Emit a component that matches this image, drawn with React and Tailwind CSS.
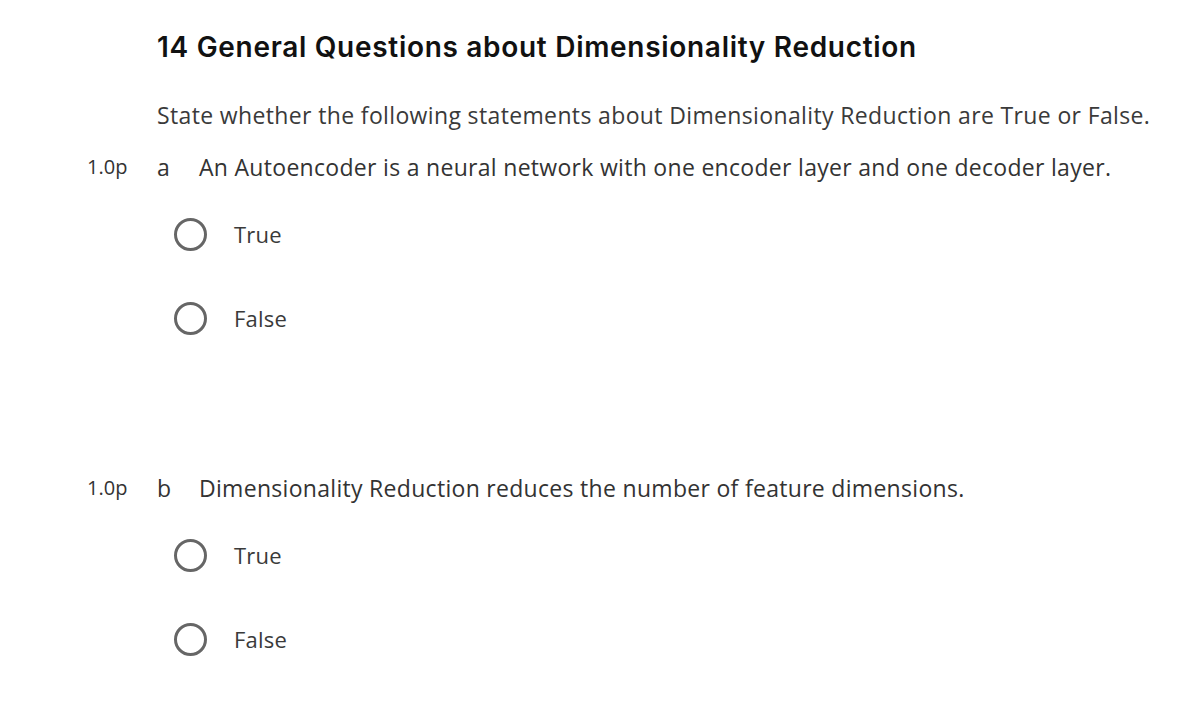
import React from "react";

const body = { fontFamily: "'Open Sans', Lato, sans-serif" };

function Radio({ label }) {
  return (
    <div className="flex items-center h-[34px]">
      <div className="w-[33px] h-[33px] rounded-full border-[3px] border-[#666]" />
      <span className="ml-[27px] text-[22px] tracking-[0.2px] text-[#3a3a3a]" style={body}>{label}</span>
    </div>
  );
}

function Question({ letter, text, className }) {
  return (
    <div className={className}>
      <div className="flex items-center h-[30px] text-[23px] tracking-[0.3px] text-[#333]" style={body}>
        <span className="w-[70px] text-[20px] tracking-normal">1.0p</span>
        <span className="w-[42px]">{letter}</span>
        <span>{text}</span>
      </div>
      <div className="ml-[87px] mt-[35px] flex flex-col gap-[50px]">
        <Radio label="True" />
        <Radio label="False" />
      </div>
    </div>
  );
}

export default function App() {
  return (
    <div className="w-[1200px] h-[710px] bg-white overflow-hidden">
      <div className="pl-[87px] pt-[30px]">
        <h1 className="ml-[70px] text-[28px] font-semibold tracking-[0.7px] text-[#111] h-[34px] leading-[34px]" style={{ fontFamily: "Inter, sans-serif" }}>
          14 General Questions about Dimensionality Reduction
        </h1>
        <p className="ml-[70px] mt-[36px] text-[23px] tracking-[0.36px] text-[#3a3a3a] h-[30px] leading-[30px]" style={body}>
          State whether the following statements about Dimensionality Reduction are True or False.
        </p>
        <Question className="mt-[22px]" letter="a" text="An Autoencoder is a neural network with one encoder layer and one decoder layer." />
        <Question className="mt-[138px]" letter="b" text="Dimensionality Reduction reduces the number of feature dimensions." />
      </div>
    </div>
  );
}
